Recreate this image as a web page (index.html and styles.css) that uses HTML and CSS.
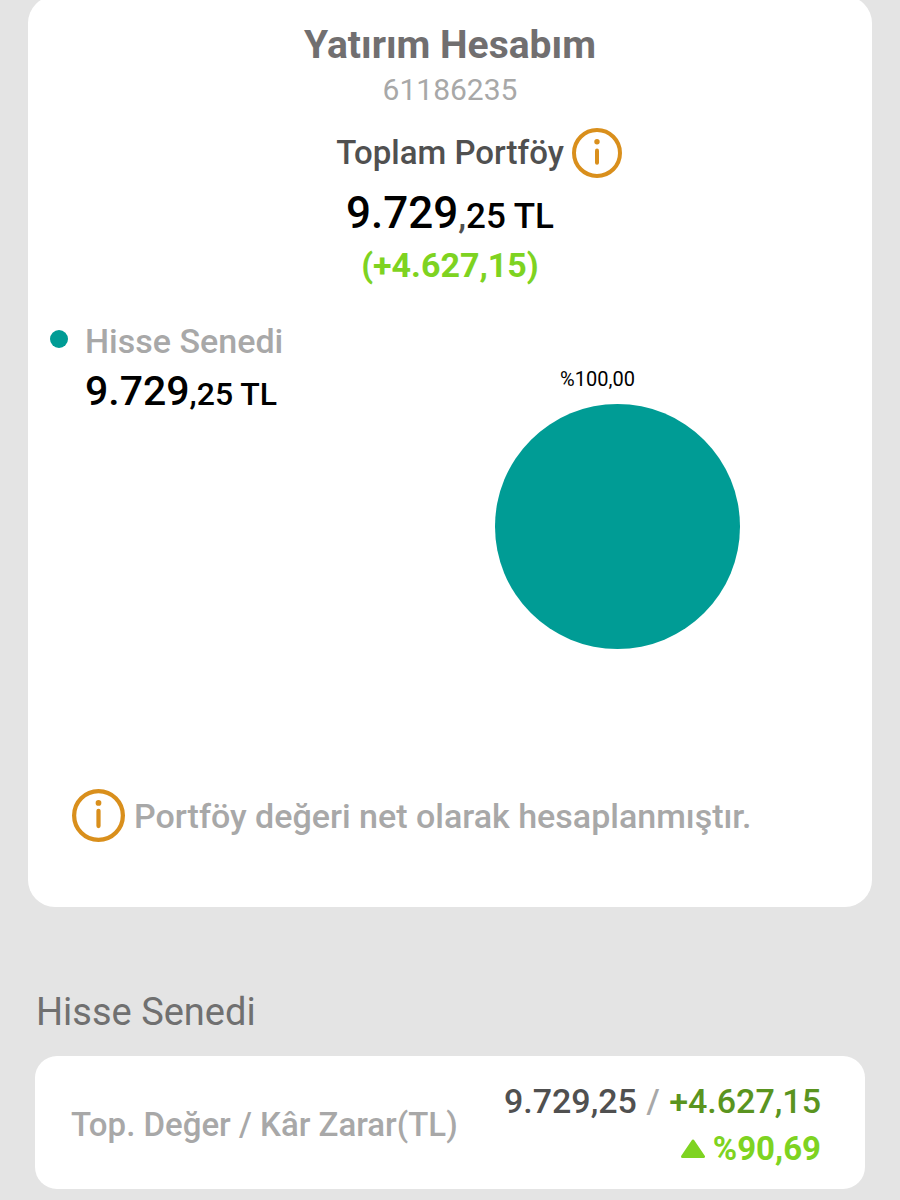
FILE: index.html
```html
<!DOCTYPE html>
<html lang="tr">
<head>
    <meta charset="utf-8">
    <meta name="viewport" content="width=device-width, initial-scale=1">
    <title>Yatırım Hesabım</title>
    <link rel="stylesheet" href="styles.css">
</head>
<body>

<main>
    <section class="portfolio">
        <h1>Yatırım Hesabım</h1>
        <p class="account-no">61186235</p>

        <div class="total-title">
            <h2>Toplam Portföy</h2>
            <button class="info-button" type="button" aria-label="Bilgi">
                <svg class="info-icon" viewBox="0 0 50 50">
                    <circle cx="25" cy="25" r="23" />
                    <path d="M25 22.5v12.3" />
                    <circle class="info-dot" cx="25" cy="13.7" r="2.7" />
                </svg>
            </button>
        </div>
        <p class="total">9.729<small><span class="comma">,</span>25 TL</small></p>
        <p class="gain">(+4.627,15)</p>

        <div class="breakdown">
            <div class="legend">
                <span class="legend-dot"></span>
                <div>
                    <h3>Hisse Senedi</h3>
                    <p class="legend-value">9.729<small>,25 TL</small></p>
                </div>
            </div>
            <div class="chart">
                <span class="chart-label">%100,00</span>
                <svg class="pie" viewBox="0 0 100 100">
                    <circle cx="50" cy="50" r="50" />
                </svg>
            </div>
        </div>

        <p class="note">
            <svg class="info-icon" viewBox="0 0 50 50">
                <circle cx="25" cy="25" r="23" />
                <path d="M25 20.6v14.4" />
                <circle class="info-dot" cx="25" cy="13.1" r="2.7" />
            </svg>
            Portföy değeri net olarak hesaplanmıştır.
        </p>
    </section>

    <h2 class="section-title">Hisse Senedi</h2>

    <section class="summary">
        <h3>Top. Değer / Kâr Zarar(TL)</h3>
        <div class="summary-values">
            <p>9.729,25 <span class="slash">/</span> <span class="profit">+4.627,15</span></p>
            <p class="percent">
                <svg class="arrow" viewBox="0 0 24 20">
                    <path d="M12 2L22.5 17.5H1.5Z" />
                </svg>
                %90,69
            </p>
        </div>
    </section>
</main>

</body>
</html>
```

FILE: styles.css
```css
body {
    margin: 0;
    background: #e4e4e4;
    font-family: Roboto, Arial, sans-serif;
    color: #000;
}
h1, h2, h3, p {
    margin: 0;
}

/* Portfolio card */
.portfolio {
    margin: -4px 28px 0;
    padding: 25px 20px 65px;
    background: #fff;
    border-radius: 27px;
    text-align: center;
}
.portfolio h1 {
    font-size: 39px;
    line-height: 48px;
    color: #716f70;
}
.account-no {
    margin-top: 3px;
    font-size: 30px;
    line-height: 36px;
    color: #a8a8a8;
}
.total-title {
    display: grid;
    grid-template-columns: 1fr auto 1fr;
    align-items: center;
    column-gap: 8px;
    margin-top: 20px;
}
.total-title h2 {
    grid-column: 2;
    font-size: 33px;
    font-weight: 500;
    line-height: 40px;
    color: #505050;
}
.info-button {
    display: flex;
    width: 50px;
    height: 50px;
    padding: 0;
    border: none;
    background: none;
    cursor: pointer;
}
.info-icon {
    flex: none;
    width: 100%;
    fill: none;
    stroke: #d98f1c;
    stroke-width: 4;
    stroke-linecap: round;
}
.info-icon .info-dot {
    fill: #d98f1c;
    stroke: none;
}
.total {
    margin-top: 9px;
    font-size: 44px;
    font-weight: 500;
    line-height: 52px;
}
.total small {
    font-size: 35px;
}
.comma {
    color: #505050;
}
.gain {
    margin-top: 2px;
    font-size: 34px;
    font-weight: 700;
    line-height: 40px;
    color: #7ed321;
}

/* Legend and pie chart */
.breakdown {
    display: grid;
    grid-template-columns: 5fr 7fr;
    margin-top: 36px;
}
.legend {
    display: flex;
    align-items: flex-start;
    gap: 17px;
    padding-left: 2px;
    text-align: left;
    white-space: nowrap;
}
.legend-dot {
    width: 18px;
    height: 18px;
    margin-top: 9px;
    border-radius: 50%;
    background: #009c95;
}
.legend h3 {
    font-size: 34px;
    font-weight: 500;
    line-height: 40px;
    color: #a8a8a8;
}
.legend-value {
    margin-top: 6px;
    font-size: 41px;
    font-weight: 500;
    line-height: 48px;
}
.legend-value small {
    font-size: 32px;
}
.chart {
    display: flex;
    flex-direction: column;
    align-items: center;
    gap: 13px;
    padding-top: 46px;
}
.chart-label {
    padding-right: 40px;
    font-size: 20px;
    line-height: 24px;
}
.pie {
    width: 245px;
    fill: #009c95;
}
.note {
    display: flex;
    align-items: center;
    gap: 9px;
    margin-top: 140px;
    padding-left: 24px;
    font-size: 34px;
    font-weight: 500;
    line-height: 40px;
    text-align: left;
    color: #a8a8a8;
}
.note .info-icon {
    width: 53px;
}

/* Stock summary */
.section-title {
    margin: 81px 36px 20px;
    font-size: 38px;
    font-weight: 400;
    line-height: 48px;
    color: #707070;
}
.summary {
    display: flex;
    align-items: center;
    justify-content: space-between;
    margin: 0 35px 11px;
    padding: 21px 44px 16px 36px;
    background: #fff;
    border-radius: 22px;
}
.summary h3 {
    font-size: 33px;
    font-weight: 500;
    line-height: 40px;
    color: #a8a8a8;
}
.summary-values {
    font-size: 34px;
    font-weight: 500;
    line-height: 48px;
    text-align: right;
    color: #505050;
}
.slash {
    margin: 0 1px;
    color: #a8a8a8;
}
.profit {
    color: #5a9420;
}
.percent {
    display: flex;
    align-items: center;
    justify-content: flex-end;
    gap: 8px;
    font-size: 33px;
    font-weight: 700;
    color: #7ed321;
}
.arrow {
    width: 24px;
    fill: #7ed321;
    stroke: #7ed321;
    stroke-width: 3;
    stroke-linejoin: round;
}
```
